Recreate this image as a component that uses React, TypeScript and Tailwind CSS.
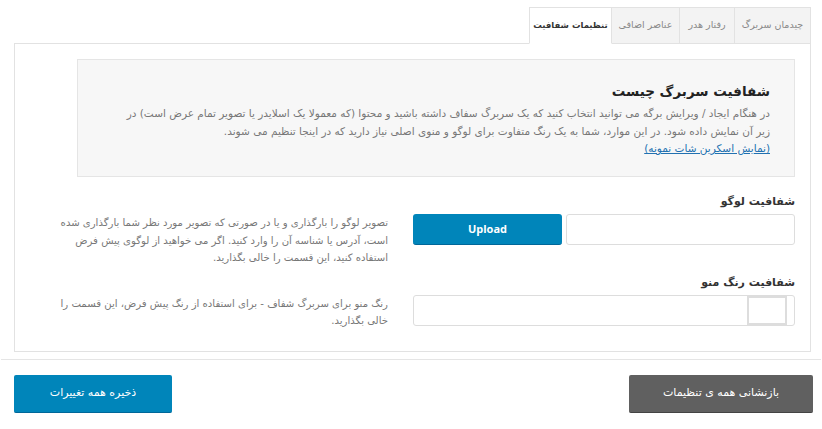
import { useState } from 'react';

const tabs = [
  { id: 'layout', label: 'چیدمان سربرگ', w: 'w-[76px]' },
  { id: 'behavior', label: 'رفتار هدر', w: 'w-[55px]' },
  { id: 'extra', label: 'عناصر اضافی', w: 'w-[68px]' },
  { id: 'transparent', label: 'تنظیمات شفافیت', w: 'w-[83px]' },
];

const fa = "font-['DejaVu_Sans','Noto_Sans',sans-serif]";

export default function App() {
  const [active, setActive] = useState('transparent');
  const [logo, setLogo] = useState('');

  return (
    <div dir="rtl" className={`w-[822px] h-[429px] bg-white overflow-hidden ${fa}`}>
      {/* tabs */}
      <div className="flex pt-[7px] mr-[11px]">
        {tabs.map((t) => (
          <button
            key={t.id}
            onClick={() => setActive(t.id)}
            className={`${t.w} h-[37px] border border-l-0 last:border-l border-[#e2e2e2] whitespace-nowrap ${
              active === t.id
                ? 'bg-white text-[#333] font-bold text-[8.5px] border-b-white relative z-10'
                : 'bg-[#f3f3f3] text-[#888] text-[9.5px]'
            }`}
          >
            {t.label}
          </button>
        ))}
      </div>

      {/* panel */}
      <div className="mr-[11px] ml-[14px] -mt-px border border-[#e2e2e2] pt-[15px] pb-[21px]">
        <div className="mr-[15px] ml-[62px] bg-[#f7f7f7] border border-[#e5e5e5] h-[118px] pr-[24px] pl-[12px] pt-[21px]">
          <h3 className="text-[13.5px] font-bold text-[#222] leading-[20px] mb-[4px]">شفافیت سربرگ چیست</h3>
          <p className="text-[10.5px] leading-[17.5px] text-[#777] whitespace-nowrap">
            در هنگام ایجاد / ویرایش برگه می توانید انتخاب کنید که یک سربرگ سفاف داشته باشید و محتوا (که معمولا یک اسلایدر یا تصویر تمام عرض است) در
            <br />
            زیر آن نمایش داده شود. در این موارد، شما به یک رنگ متفاوت برای لوگو و منوی اصلی نیاز دارید که در اینجا تنظیم می شوند.
            <br />
            <a href="#" className="text-[#2271b1] underline">(نمایش اسکرین شات نمونه)</a>
          </p>
        </div>

        {/* logo */}
        <div className="mt-[16px] mr-[15px] w-[382px] text-[11px] font-bold text-[#333] leading-[18px]">شفافیت لوگو</div>
        <div className="flex items-start mt-[3px] mr-[15px]">
          <div className="w-[382px] flex gap-[4px]">
            <input
              value={logo}
              onChange={(e) => setLogo(e.target.value)}
              className="w-[229px] h-[31px] border border-[#ddd] rounded-[3px] bg-white px-2 outline-none"
            />
            <button className="w-[149px] h-[31px] rounded-[3px] bg-[#0085ba] border-b border-[#006799] text-white text-[11px] font-bold font-['Open_Sans',sans-serif]">
              Upload
            </button>
          </div>
          <p className="mr-[25px] text-[10.1px] leading-[17.5px] text-[#777] whitespace-nowrap">
            تصویر لوگو را بارگذاری و یا در صورتی که تصویر مورد نظر شما بارگذاری شده
            <br />
            است، آدرس یا شناسه آن را وارد کنید. اگر می خواهید از لوگوی پیش فرض
            <br />
            استفاده کنید، این قسمت را خالی بگذارید.
          </p>
        </div>

        {/* menu color */}
        <div className="mt-[7px] mr-[15px] w-[382px] text-[11px] font-bold text-[#333] leading-[18px]">شفافیت رنگ منو</div>
        <div className="flex items-start mt-[3px] mr-[15px]">
          <div className="w-[382px] h-[31px] border border-[#ddd] rounded-[3px] bg-white flex pr-[7px]">
            <div className="w-[40px] h-full border-2 border-[#ddd]" />
          </div>
          <p className="mr-[25px] text-[10.1px] leading-[17.5px] text-[#777] whitespace-nowrap">
            رنگ منو برای سربرگ شفاف - برای استفاده از رنگ پیش فرض، این قسمت را
            <br />
            خالی بگذارید.
          </p>
        </div>
      </div>

      {/* footer */}
      <div className="mt-[7px] mx-px border-t border-[#e5e5e5] pt-[15px] pr-[8px] pl-[13px] flex justify-between">
        <button className="w-[184px] h-[38px] bg-[#606060] border-b border-[#444] rounded-[2px] text-white text-[11px]">
          بازنشانی همه ی تنظیمات
        </button>
        <button className="w-[158px] h-[38px] bg-[#0085ba] border-b border-[#006799] rounded-[2px] text-white text-[11px]">
          ذخیره همه تغییرات
        </button>
      </div>
    </div>
  );
}
